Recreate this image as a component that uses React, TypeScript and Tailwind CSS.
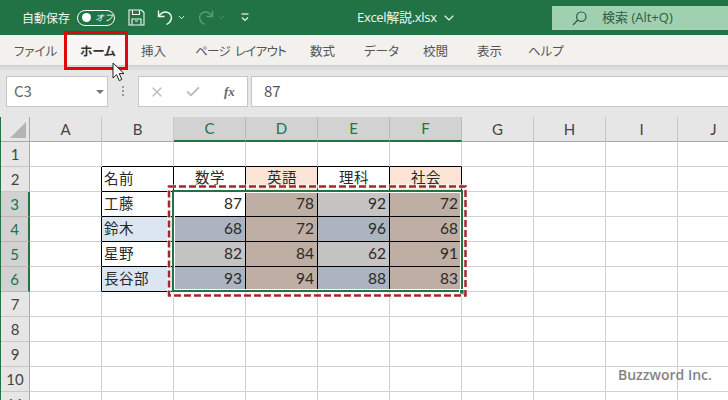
import { ChevronDown, Check, X } from "lucide-react";

const FONT = "font-['Lato','Noto_Sans_CJK_JP',sans-serif]";

const tabs = [
  { label: "ファイル", w: "w-[38px]" },
  { label: "ホーム", w: "w-[33px]", active: true },
  { label: "挿入", w: "w-[26px]" },
  { label: "ページ レイアウト", w: "w-[87px] tracking-[-0.7px] [word-spacing:3px]" },
  { label: "数式", w: "w-[26px]" },
  { label: "データ", w: "w-[31px]" },
  { label: "校閲", w: "w-[26px]" },
  { label: "表示", w: "w-[26px]" },
  { label: "ヘルプ", w: "w-[32px] -translate-x-[3px]" },
];

const columns = ["A", "B", "C", "D", "E", "F", "G", "H", "I", "J"];
const rows = [1, 2, 3, 4, 5, 6, 7, 8, 9, 10, 11];

const WHITE = "bg-white";
const TAN = "bg-[#bfaea3]";
const GREY = "bg-[#c6c4c3]";
const BLUE = "bg-[#abb4bf]";
const PEACH = "bg-[#fce4d6]";
const PALE = "bg-[#dce6f1]";

// table contents, keyed by row number; columns B to F
const table: Record<number, { text: string; bg: string }[]> = {
  2: [
    { text: "名前", bg: WHITE },
    { text: "数学", bg: WHITE },
    { text: "英語", bg: PEACH },
    { text: "理科", bg: WHITE },
    { text: "社会", bg: PEACH },
  ],
  3: [
    { text: "工藤", bg: WHITE },
    { text: "87", bg: WHITE },
    { text: "78", bg: TAN },
    { text: "92", bg: GREY },
    { text: "72", bg: TAN },
  ],
  4: [
    { text: "鈴木", bg: PALE },
    { text: "68", bg: BLUE },
    { text: "72", bg: TAN },
    { text: "96", bg: BLUE },
    { text: "68", bg: TAN },
  ],
  5: [
    { text: "星野", bg: WHITE },
    { text: "82", bg: GREY },
    { text: "84", bg: TAN },
    { text: "62", bg: GREY },
    { text: "91", bg: TAN },
  ],
  6: [
    { text: "長谷部", bg: PALE },
    { text: "93", bg: BLUE },
    { text: "94", bg: TAN },
    { text: "88", bg: BLUE },
    { text: "83", bg: TAN },
  ],
};

function TitleBar() {
  return (
    <div className="h-[35px] shrink-0 bg-[#217346] flex items-center text-[#f1f6f3] relative">
      <span className="ml-[22px] w-[48px] text-[12px] whitespace-nowrap">自動保存</span>
      {/* autosave toggle */}
      <div className="ml-[7px] w-[38px] h-[16px] rounded-full border border-white flex items-center pl-[4px] gap-[4px]">
        <span className="w-[9px] h-[9px] rounded-full bg-white" />
        <span className="text-[9px] italic leading-none whitespace-nowrap">オフ</span>
      </div>
      <svg className="ml-[13px]" width="17" height="17" viewBox="0 0 17 17" fill="none" stroke="#f1f6f3" strokeWidth="1.1">
        <path d="M1 1h12.5L16 3.5V16H1z" />
        <path d="M4.5 1v4.5h7V1M4 16v-6h9v6M7 12h3" />
      </svg>
      <svg className="ml-[12px]" width="17" height="17" viewBox="0 0 17 17" fill="none" stroke="#f1f6f3" strokeWidth="1.4">
        <path d="M1.5 1.5v6h6" />
        <path d="M1.8 7.3C4 4 7 2.5 10 3.2c3.5.8 5 4 4.2 7-.6 2.2-2.2 4-4.7 5.3" />
      </svg>
      <ChevronDown className="ml-[3px]" size={9} strokeWidth={2.5} />
      <svg className="ml-[11px]" width="17" height="17" viewBox="0 0 17 17" fill="none" stroke="#5d9a78" strokeWidth="1.4">
        <path d="M15.5 1.5v6h-6" />
        <path d="M15.2 7.3C13 4 10 2.5 7 3.2c-3.5.8-5 4-4.2 7 .6 2.2 2.2 4 4.7 5.3" />
      </svg>
      <ChevronDown className="ml-[3px] text-[#5d9a78]" size={9} strokeWidth={2} />
      <svg className="ml-[15px]" width="8" height="9" viewBox="0 0 8 9" fill="none" stroke="#f1f6f3" strokeWidth="1.2">
        <path d="M0.5 1h7" />
        <path d="M1 4.5l3 3 3-3" />
      </svg>
      <span className="ml-[108px] w-[84px] text-[13px] whitespace-nowrap font-['Open_Sans','Noto_Sans_CJK_JP',sans-serif] tracking-[-0.3px]">
        Excel解説.xlsx
      </span>
      <ChevronDown size={16} strokeWidth={1.6} />
      <div className="ml-auto w-[176px] h-[24px] self-start mt-[6px] bg-[#9fd0b0] flex items-center text-[#2f5c43]">
        <svg className="ml-[20px]" width="15" height="15" viewBox="0 0 15 15" fill="none" stroke="#2f5c43" strokeWidth="1.2">
          <circle cx="9.3" cy="5.7" r="4.7" />
          <path d="M5.8 9L1 14" />
        </svg>
        <span className="ml-[15px] text-[13px] whitespace-nowrap font-['Open_Sans','Noto_Sans_CJK_JP',sans-serif]">検索 (Alt+Q)</span>
      </div>
    </div>
  );
}

function TabBar() {
  return (
    <div className="h-[30px] shrink-0 bg-[#f3f1ee] flex items-stretch pl-[14px] gap-[28px] text-[12.5px] text-[#555] [font-feature-settings:'palt']">
      {tabs.map((tab) => (
        <div
          key={tab.label}
          className={`${tab.w} flex items-center whitespace-nowrap pt-[2px] ${
            tab.active ? "font-bold text-[#333] bg-[#f8f7f5] shadow-[0_0_0_15px_#f8f7f5] [clip-path:inset(0_-15px)]" : ""
          }`}
        >
          {tab.label}
        </div>
      ))}
    </div>
  );
}

function FormulaBar() {
  return (
    <div className="h-[52px] shrink-0 bg-[#e6e6e6] bg-gradient-to-b from-[#cfcfcf] to-[#e6e6e6] bg-[length:100%_6px] bg-no-repeat flex items-start pt-[11px] pl-[6px]">
      <div className="w-[102px] h-[31px] bg-white border border-[#c6c6c6] flex items-center pl-[7px] text-[15px] text-[#666]">
        C3
        <span className="ml-auto mr-[3px] w-0 h-0 border-x-[4px] border-x-transparent border-t-[4px] border-t-[#777]" />
      </div>
      <div className="ml-[14px] mt-[10px] flex flex-col gap-[2px]">
        <span className="w-[2px] h-[2px] bg-[#999]" />
        <span className="w-[2px] h-[2px] bg-[#999]" />
        <span className="w-[2px] h-[2px] bg-[#999]" />
      </div>
      <div className="ml-[14px] w-[110px] h-[31px] bg-white border border-[#c6c6c6] flex items-center text-[#bdbdbd]">
        <X className="ml-[10px]" size={16} strokeWidth={2} />
        <Check className="ml-[20px]" size={16} strokeWidth={3} />
        <span className="ml-[23px] text-[13px] italic font-bold text-[#666] font-['Liberation_Serif',serif]">fx</span>
      </div>
      <div className="ml-[3px] flex-1 h-[31px] bg-white border border-r-0 border-[#c6c6c6] flex items-center pl-[12px] text-[15px] text-[#555]">
        87
      </div>
    </div>
  );
}

function Sheet() {
  return (
    <div className={`relative flex-1 grid grid-cols-[29px_repeat(10,72px)] auto-rows-[25px] border-l border-[#217346] ${FONT} text-[#2a2a2a] bg-white`}>
      {/* corner */}
      <div className="bg-[#e6e6e6] border-r border-b border-[#a9a9a9] flex items-end justify-end pr-[3px] pb-[3px]">
        <span className="w-0 h-0 border-l-[16px] border-l-transparent border-b-[16px] border-b-[#b4b4b4]" />
      </div>
      {columns.map((c, i) => {
        const on = i >= 2 && i <= 5;
        return (
          <div
            key={c}
            className={`flex items-center justify-center text-[15px] border-r ${
              on
                ? "bg-[#d2d2d2] text-[#217346] border-[#b8b8b8] border-b-2 border-b-[#217346]"
                : "bg-[#e6e6e6] text-[#444] border-[#c8c8c8] border-b border-b-[#a9a9a9]"
            }`}
          >
            {c}
          </div>
        );
      })}

      {rows.map((r) => {
        const on = r >= 3 && r <= 6;
        const cells = table[r];
        return [
          <div
            key={`h${r}`}
            className={`flex items-center justify-center text-[15px] border-b ${
              on
                ? "bg-[#d2d2d2] text-[#217346] border-b-[#b8b8b8] border-r-2 border-r-[#217346]"
                : "bg-[#e6e6e6] text-[#444] border-b-[#c8c8c8] border-r border-r-[#a9a9a9]"
            }`}
          >
            {r}
          </div>,
          ...columns.map((c, i) => {
            const cell = cells && i >= 1 && i <= 5 ? cells[i - 1] : null;
            if (cell) {
              const isNumber = /^\d+$/.test(cell.text);
              const isHeading = r === 2 && i > 1;
              return (
                <div
                  key={c + r}
                  className={`${cell.bg} border-r border-b border-black flex items-center whitespace-nowrap ${
                    isNumber
                      ? "justify-end pr-[3px] text-[15.5px]"
                      : isHeading
                        ? "justify-center text-[14.5px] tracking-[0.5px] pb-[2px] pl-[1px]"
                        : "pl-[2px] text-[14.5px] tracking-[0.5px]"
                  }`}
                >
                  {cell.text}
                </div>
              );
            }
            const blackRight = i === 0 && r >= 2 && r <= 6;
            const blackBottom = r === 1 && i >= 1 && i <= 5;
            return (
              <div
                key={c + r}
                className={`border-r border-b ${blackRight ? "border-r-black" : "border-r-[#d0d0d0]"} ${
                  blackBottom ? "border-b-black" : "border-b-[#d0d0d0]"
                }`}
              />
            );
          }),
        ];
      })}

      {/* active selection C3:F6 */}
      <div className="absolute left-[171px] top-[73px] w-[291px] h-[102px] border-2 border-[#217346] shadow-[inset_0_0_0_1px_#fff]" />
      <div className="absolute left-[458px] top-[172px] w-[7px] h-[7px] bg-[#217346] border border-white" />

      {/* annotation: dashed red box */}
      <svg className="absolute left-[165px] top-[67px] pointer-events-none" width="304" height="116" fill="none">
        <rect x="3" y="2.5" width="296.5" height="109" stroke="#ffffff" strokeOpacity="0.7" strokeWidth="4" />
        <rect x="3" y="2.5" width="296.5" height="109" stroke="#a6262c" strokeWidth="2.5" strokeDasharray="7 3" />
      </svg>

      {/* watermark */}
      <span className="absolute left-[617px] top-[247px] text-[14px] font-semibold text-[#777] whitespace-nowrap font-['Open_Sans',sans-serif] opacity-90">
        Buzzword Inc.
      </span>
    </div>
  );
}

export default function App() {
  return (
    <div className="relative w-[728px] h-[400px] overflow-hidden flex flex-col font-['Noto_Sans_CJK_JP','Noto_Sans',sans-serif]">
      <TitleBar />
      <TabBar />
      <FormulaBar />
      <Sheet />

      {/* annotation: red box round the Home tab */}
      <div className="absolute left-[64px] top-[31px] w-[64px] h-[39px] border-[3px] border-[#e0060c]" />

      {/* mouse pointer */}
      <svg className="absolute left-[112px] top-[62px]" width="13" height="20" viewBox="0 0 13 20">
        <path d="M1 1v15l3.6-3.4 2.6 6 2.6-1.1-2.6-5.9H12z" fill="#fff" stroke="#222" strokeWidth="1" strokeLinejoin="round" />
      </svg>
    </div>
  );
}
